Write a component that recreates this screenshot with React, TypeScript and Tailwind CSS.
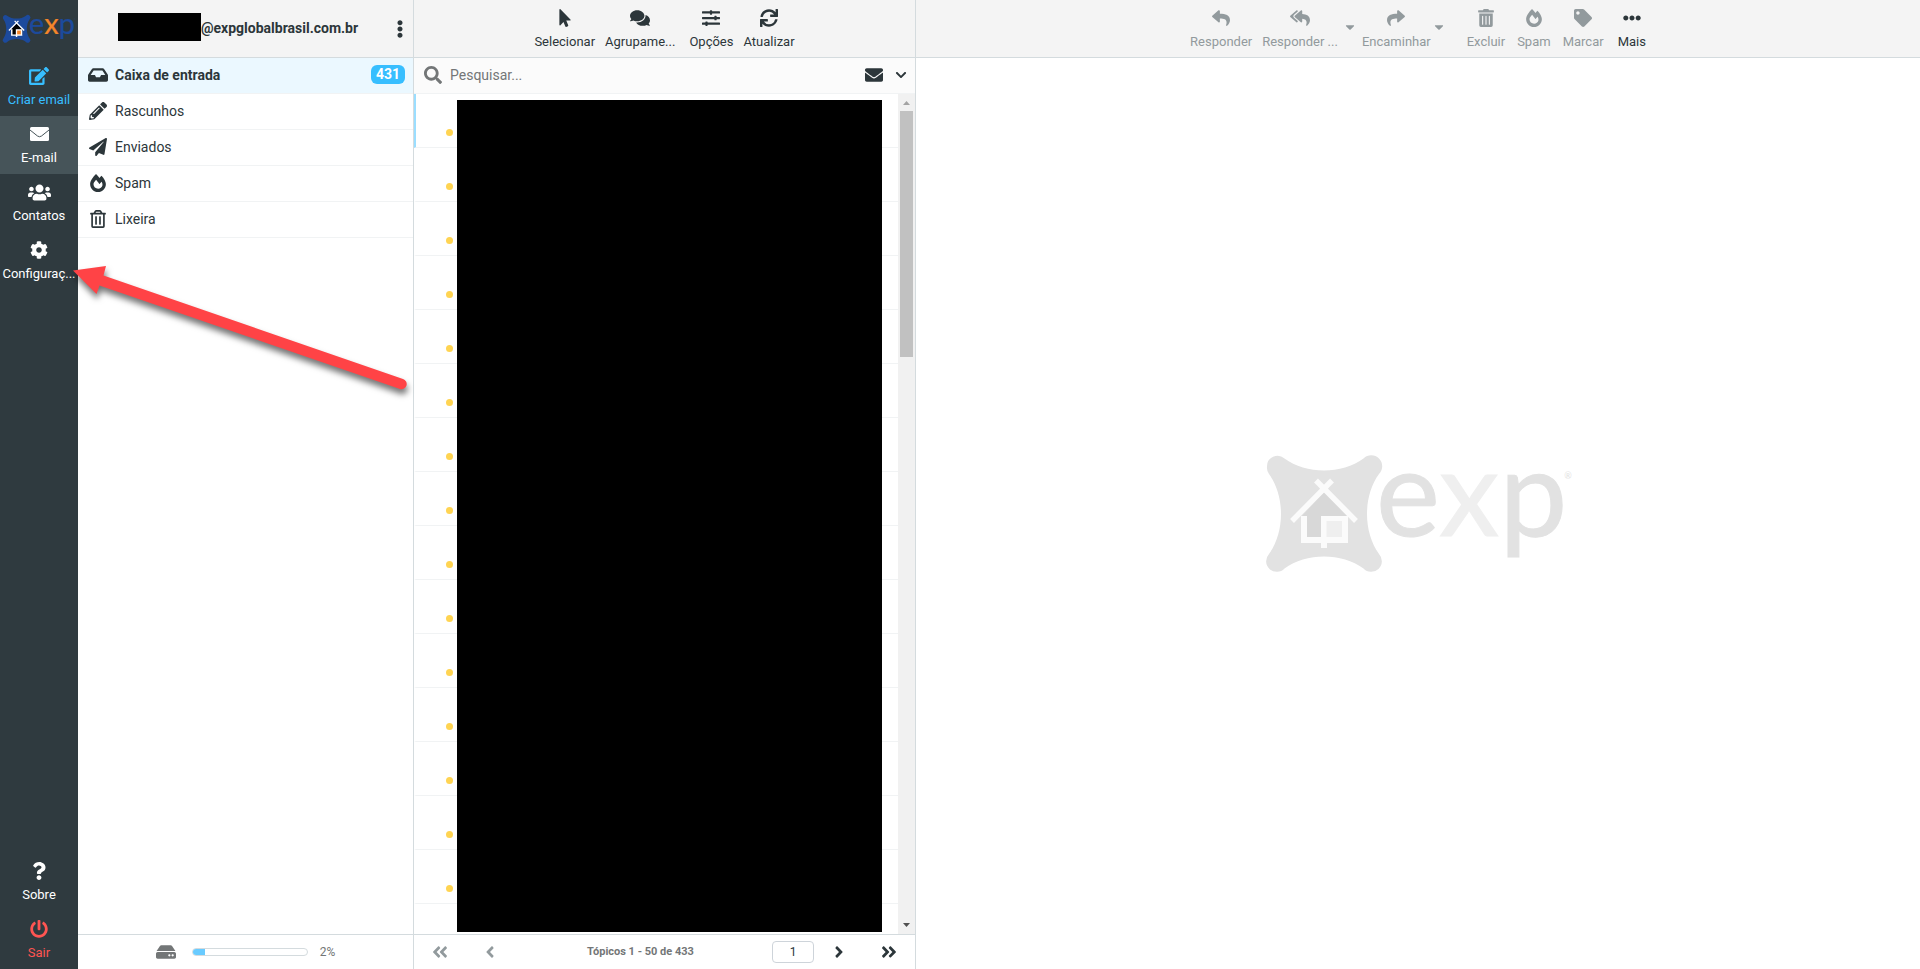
import type { ReactNode } from 'react';
import {
  FaAngleDoubleLeft,
  FaAngleDoubleRight,
  FaAngleLeft,
  FaAngleRight,
  FaCaretDown,
  FaChevronDown,
  FaCog,
  FaComments,
  FaEdit,
  FaEllipsisH,
  FaEllipsisV,
  FaEnvelope,
  FaFireAlt,
  FaHdd,
  FaInbox,
  FaMousePointer,
  FaPaperPlane,
  FaPencilAlt,
  FaPowerOff,
  FaQuestion,
  FaRegTrashAlt,
  FaReply,
  FaReplyAll,
  FaSearch,
  FaShare,
  FaSlidersH,
  FaSync,
  FaTag,
  FaTrashAlt,
  FaUsers,
} from 'react-icons/fa';

type LogoProps = {
  className: string;
  main: string;
  accent: string;
  house: string;
  line: string;
};

function Logo({ className, main, accent, house, line }: LogoProps) {
  return (
    <svg viewBox="19 -16 318 199" className={className} role="img" aria-label="exp">
      <path
        fill={main}
        d="M27 36.500A10.500 10.500 0 0 1 44.500 28.500C66 44.500 102 44.500 123.500 28.500A10.500 10.500 0 0 1 139 44C123 66 123 102 139 124A10.500 10.500 0 0 1 123.500 138.500C102 122.500 66 122.500 44.500 138.500A10.500 10.500 0 0 1 29 124C45 102 45 66 29 44A10.500 10.500 0 0 1 27 36.500Z"
      />
      <path fill={house} d="M84 62L108 87V110H62V86Z" />
      <path fill="none" stroke={line} strokeWidth="5.500" d="M76 50.500L116 91M92 50.500L52 91" />
      <path fill={line} d="M61 86H67V107H81V86H108V113H87V118H81V113H61Z" />
      <path fill={accent} d="M86.500 91H102V107H86.500Z" />
      <text
        x="136"
        y="105.500"
        fontSize="121"
        fill={main}
        stroke={main}
        strokeWidth="1"
        fontFamily="Lato, sans-serif"
      >
        e
        <tspan fill={accent} stroke={accent}>
          x
        </tspan>
        p
        <tspan dx="-3" dy="-57" fontSize="9" stroke="none">
          ®
        </tspan>
      </text>
    </svg>
  );
}

function MailIcon() {
  return (
    <svg viewBox="0 0 19 14" className="w-[19px]" aria-hidden="true">
      <rect width="19" height="14" rx="1.500" fill="currentColor" />
      <path d="M0 3L7.500 9Q9.500 10.500 11.500 9L19 3" fill="none" stroke="#465459" />
    </svg>
  );
}

function RailButton({
  icon,
  label,
  className = 'text-white',
}: {
  icon: ReactNode;
  label: string;
  className?: string;
}) {
  return (
    <button
      type="button"
      className={`flex h-[58px] w-full flex-col items-center gap-1 pt-2 text-[13px] leading-5 whitespace-nowrap ${className}`}
    >
      <span className="flex h-5 items-center text-[18px]">{icon}</span>
      {label}
    </button>
  );
}

function ToolButton({
  icon,
  label,
  disabled = false,
  className = '',
}: {
  icon: ReactNode;
  label: string;
  disabled?: boolean;
  className?: string;
}) {
  return (
    <button
      type="button"
      disabled={disabled}
      className={`flex flex-col items-center gap-1 px-[5px] text-[13px] leading-5 whitespace-nowrap disabled:text-[#929a9d] ${className}`}
    >
      <span className="flex h-5 items-center text-[18px]">{icon}</span>
      {label}
    </button>
  );
}

function CaretButton({ label }: { label: string }) {
  return (
    <button
      type="button"
      disabled
      aria-label={label}
      className="-mx-1 self-start pt-3 text-[#929a9d]"
    >
      <FaCaretDown size={14} />
    </button>
  );
}

const folders = [
  { name: 'Caixa de entrada', icon: <FaInbox size={20} />, unread: 431 },
  { name: 'Rascunhos', icon: <FaPencilAlt /> },
  { name: 'Enviados', icon: <FaPaperPlane /> },
  { name: 'Spam', icon: <FaFireAlt /> },
  { name: 'Lixeira', icon: <FaRegTrashAlt /> },
];

const messages = Array.from({ length: 15 }, (_, i) => i);

function Rail() {
  return (
    <nav className="flex w-[78px] shrink-0 flex-col bg-[#2f3a3f]">
      <div className="flex h-[58px] items-center justify-center">
        <Logo className="w-[76px]" main="#1c4a9c" accent="#f5862a" house="#000000" line="#ffffff" />
      </div>
      <RailButton icon={<FaEdit size={20} />} label="Criar email" className="text-[#37beff]" />
      <RailButton icon={<MailIcon />} label="E-mail" className="bg-[#465459] text-white" />
      <RailButton icon={<FaUsers size={23} />} label="Contatos" />
      <RailButton icon={<FaCog />} label="Configuraç..." />
      <div className="flex-1" />
      <RailButton icon={<FaQuestion />} label="Sobre" />
      <RailButton icon={<FaPowerOff />} label="Sair" className="text-[#ff5552]" />
    </nav>
  );
}

function Folders() {
  return (
    <aside className="flex w-[336px] shrink-0 flex-col border-r border-[#d4dbde]">
      <header className="flex h-[58px] items-center border-b border-[#d4dbde] bg-[#f4f4f4] pr-1 pb-1 pl-10">
        <div className="h-7 w-[83px] bg-black" />
        <span className="flex-1 pt-0.5 text-sm font-bold">@expglobalbrasil.com.br</span>
        <button type="button" aria-label="Mais opções" className="pt-1">
          <FaEllipsisV size={18} />
        </button>
      </header>
      <ul className="flex-1">
        {folders.map(({ name, icon, unread }) => (
          <li
            key={name}
            className={`border-b border-[#f1f3f4] ${unread ? 'bg-[#ebf8ff] font-bold' : ''}`}
          >
            <a href="#" className="flex h-[35px] items-center gap-[7px] pr-2 pb-0.5 pl-2.5">
              <span className="flex w-5 justify-center text-[18px]">{icon}</span>
              <span className="flex-1 text-sm">{name}</span>
              {unread && (
                <span className="rounded-md bg-[#37beff] px-[5px] text-sm leading-[19px] text-white">
                  {unread}
                </span>
              )}
            </a>
          </li>
        ))}
      </ul>
      <footer className="flex h-[35px] items-center justify-center border-t border-[#d4dbde] text-xs text-[#737677]">
        <FaHdd size={20} />
        <div className="mr-3 ml-4 h-2 w-[116px] overflow-hidden rounded-full border border-[#d4dbde]">
          <div className="h-full w-3 bg-[#69cbff]" />
        </div>
        2%
      </footer>
    </aside>
  );
}

function MessageList() {
  return (
    <section className="flex w-[502px] shrink-0 flex-col border-r border-[#d4dbde]">
      <header className="flex h-[58px] justify-center border-b border-[#d4dbde] bg-[#f4f4f4] pt-2">
        <ToolButton icon={<FaMousePointer />} label="Selecionar" />
        <ToolButton icon={<FaComments size={20} />} label="Agrupame..." className="mr-1" />
        <ToolButton icon={<FaSlidersH />} label="Opções" />
        <ToolButton icon={<FaSync />} label="Atualizar" />
      </header>
      <div className="flex h-9 items-center border-b border-[#f1f3f4] bg-[#fbfbfb] pr-2 pb-0.5 pl-2.5">
        <FaSearch size={18} className="text-[#737677]" />
        <input
          type="text"
          aria-label="Pesquisar"
          placeholder="Pesquisar..."
          className="ml-2 min-w-0 flex-1 text-sm outline-none placeholder:text-[#737677]"
        />
        <button type="button" aria-label="Não lidas" className="mr-3">
          <FaEnvelope size={18} />
        </button>
        <button type="button" aria-label="Opções de pesquisa">
          <FaChevronDown size={12} />
        </button>
      </div>
      <div className="flex min-h-0 flex-1">
        <div className="relative min-w-0 flex-1 overflow-hidden">
          <ul>
            {messages.map((i) => (
              <li
                key={i}
                className={`flex h-[54px] items-end border-b border-l-2 border-b-[#f1f3f4] pb-[11px] pl-[30px] ${
                  i === 0 ? 'border-l-[#9bdeff]' : 'border-l-transparent'
                }`}
              >
                <span className="size-[7px] rounded-full bg-[#ffd452]" />
              </li>
            ))}
          </ul>
          <div className="absolute top-1.5 right-4 bottom-0.5 left-[43px] bg-black" />
        </div>
        <div className="flex w-[17px] flex-col items-center bg-[#f1f1f1]">
          <svg viewBox="0 0 17 17" className="size-[17px]" fill="#a3a3a3">
            <path d="M5 11L8.500 7L12 11Z" />
          </svg>
          <div className="h-[246px] w-[13px] bg-[#c1c1c1]" />
          <div className="flex-1" />
          <svg viewBox="0 0 17 17" className="size-[17px]" fill="#505050">
            <path d="M5 6L8.500 10L12 6Z" />
          </svg>
        </div>
      </div>
      <footer className="flex h-[35px] items-center border-t border-[#d4dbde] px-[17px]">
        <button type="button" disabled aria-label="Primeira página" className="text-[#929a9d]">
          <FaAngleDoubleLeft size={18} />
        </button>
        <button type="button" disabled aria-label="Página anterior" className="ml-8 text-[#929a9d]">
          <FaAngleLeft size={18} />
        </button>
        <span className="flex-1 pl-2.5 text-center text-[11px] font-bold text-[#737677]">
          Tópicos 1 - 50 de 433
        </span>
        <input
          type="text"
          aria-label="Página"
          defaultValue="1"
          className="h-[22px] w-[42px] rounded border border-[#ced4da] text-center text-xs outline-none"
        />
        <button type="button" aria-label="Próxima página" className="ml-4">
          <FaAngleRight size={18} />
        </button>
        <button type="button" aria-label="Última página" className="ml-8">
          <FaAngleDoubleRight size={18} />
        </button>
      </footer>
    </section>
  );
}

function Preview() {
  return (
    <main className="flex min-w-0 flex-1 flex-col">
      <header className="flex h-[58px] justify-center border-b border-[#d4dbde] bg-[#f4f4f4] pt-2">
        <ToolButton icon={<FaReply />} label="Responder" disabled />
        <ToolButton
          icon={<FaReplyAll size={20} />}
          label="Responder ..."
          disabled
          className="mr-1"
        />
        <CaretButton label="Opções de resposta" />
        <ToolButton icon={<FaShare />} label="Encaminhar" disabled className="ml-1" />
        <CaretButton label="Opções de encaminhamento" />
        <ToolButton icon={<FaTrashAlt />} label="Excluir" disabled className="ml-5" />
        <ToolButton icon={<FaFireAlt />} label="Spam" disabled className="mx-0.5" />
        <ToolButton icon={<FaTag />} label="Marcar" disabled />
        <ToolButton icon={<FaEllipsisH />} label="Mais" className="ml-1" />
      </header>
      <div className="flex flex-1 items-center justify-center">
        <Logo className="w-[318px]" main="#e2e2e2" accent="#efefef" house="#d8d8d8" line="#fbfbfb" />
      </div>
    </main>
  );
}

function Arrow() {
  return (
    <svg
      viewBox="0 0 350 140"
      className="pointer-events-none absolute top-[260px] left-[70px] w-[350px] drop-shadow-[1px_5px_3px_rgba(0,0,0,0.55)]"
      fill="#ff4346"
      aria-hidden="true"
    >
      <path d="M3 10.500L36 6L33.500 15.500L333 119A5 5 0 0 1 330 129L29.500 25.500L26.500 34Z" />
    </svg>
  );
}

export default function App() {
  return (
    <div className="relative flex h-screen overflow-hidden bg-white font-[Roboto,sans-serif] text-[#2c363a]">
      <Rail />
      <Folders />
      <MessageList />
      <Preview />
      <Arrow />
    </div>
  );
}
